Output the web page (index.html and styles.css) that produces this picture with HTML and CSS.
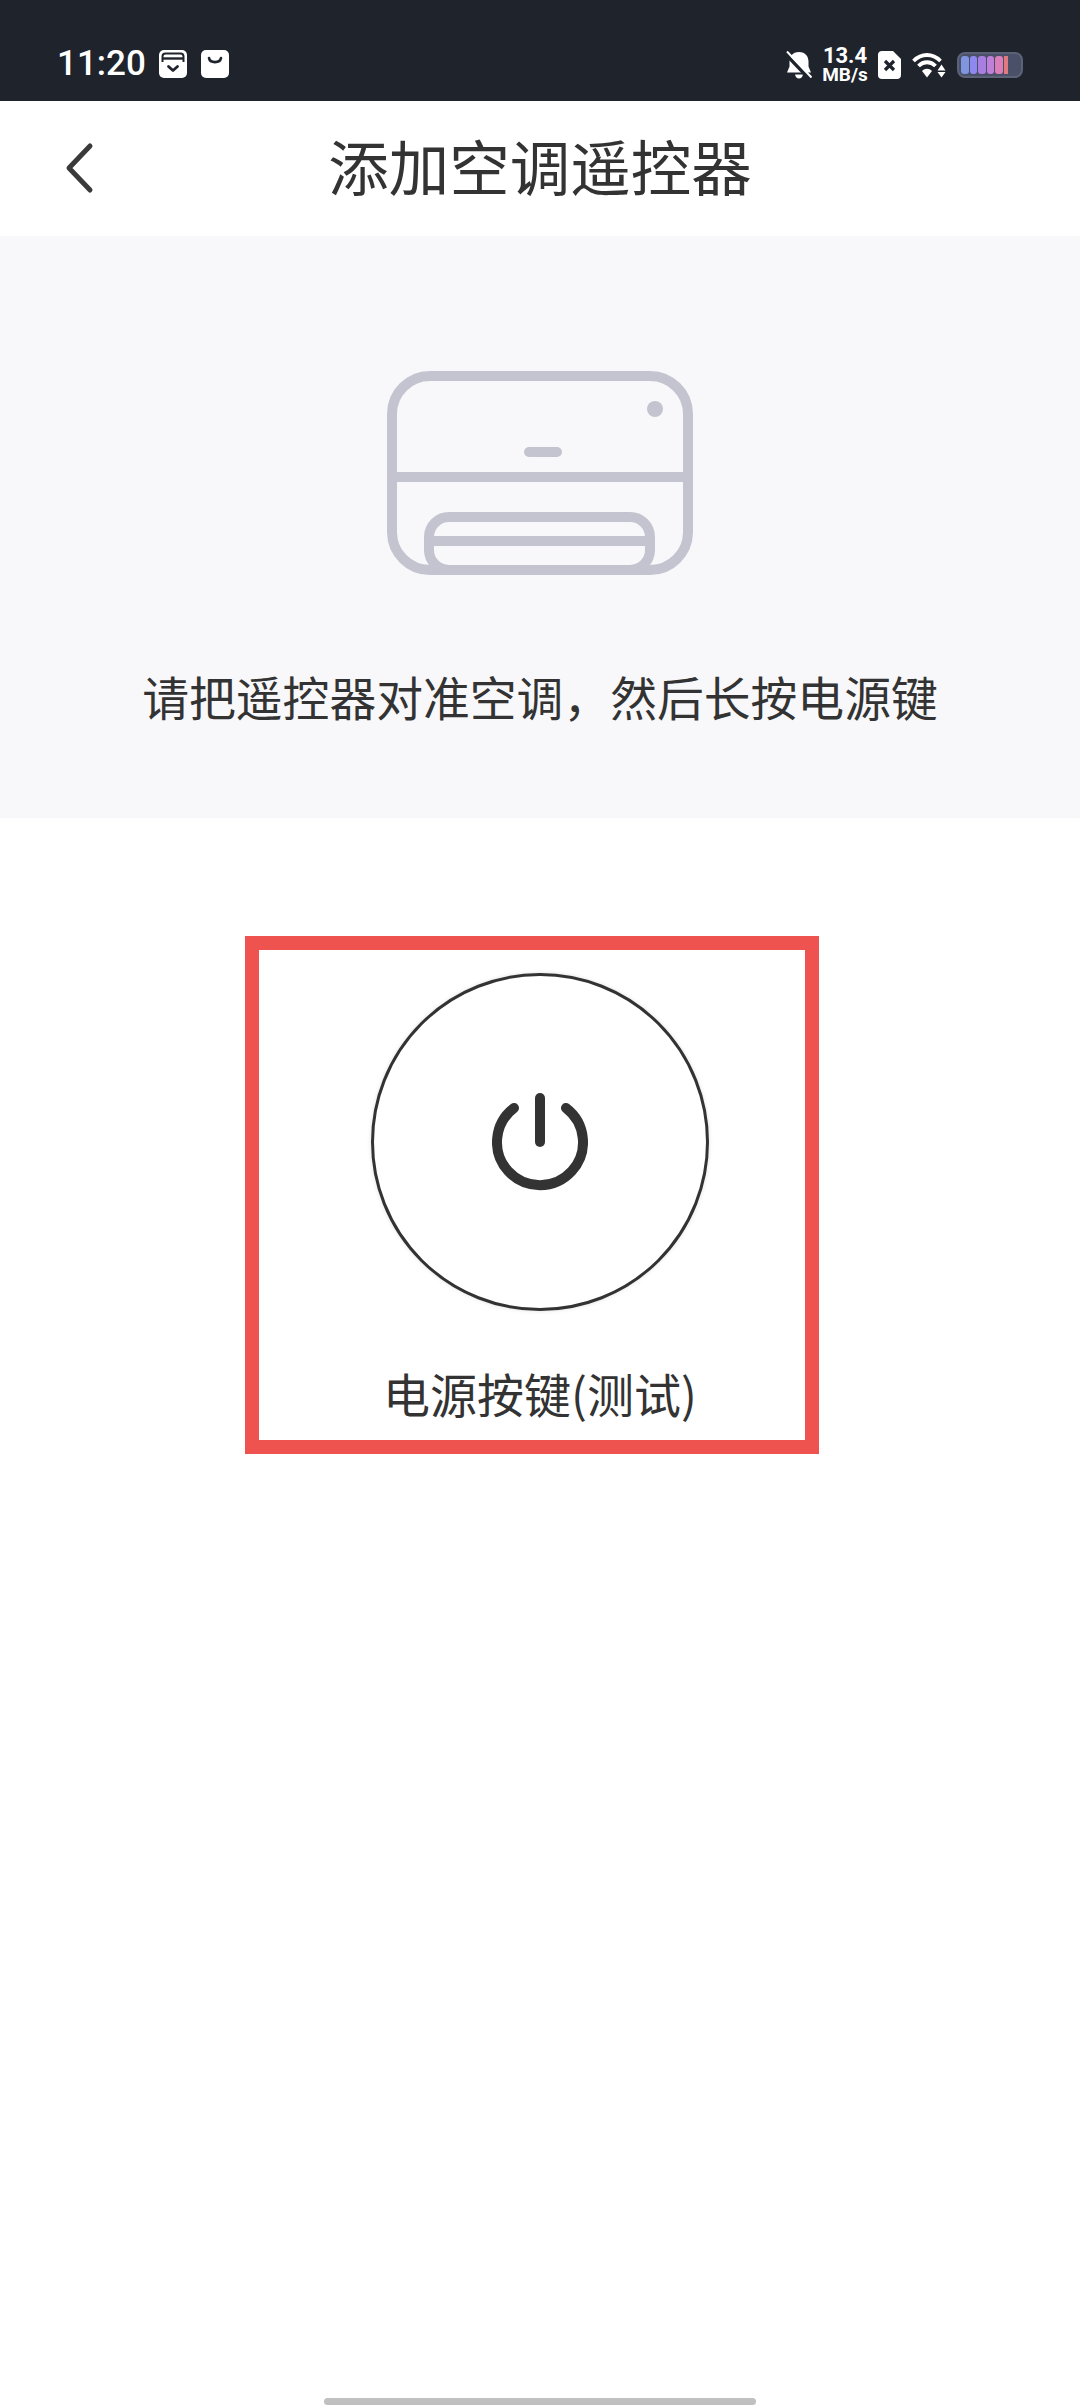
FILE: index.html
```html
<!DOCTYPE html>
<html lang="zh-CN">
<head>
    <meta charset="UTF-8">
    <meta name="viewport" content="width=device-width, initial-scale=1.0">
    <title>添加空调遥控器</title>
    <link rel="stylesheet" href="styles.css">
</head>
<body>

    <!-- Status bar -->
    <div class="status-bar">
        <div class="status-left">
            <span class="time">11:20</span>
            <svg class="app-icon" viewBox="0 0 28 28">
                <rect width="28" height="28" rx="5" fill="#fff"/>
                <path d="M3.500 12V6.500Q3.500 3.500 6.500 3.500H21.500Q24.500 3.500 24.500 6.500V12" fill="none" stroke="#1f242c" stroke-width="2"/>
                <path d="M3.500 8.500H24.500" fill="none" stroke="#1f242c" stroke-width="2.400"/>
                <path d="M9.500 16.500L14 20.500L18.500 16.500" fill="none" stroke="#1f242c" stroke-width="2.800" stroke-linecap="round" stroke-linejoin="round"/>
            </svg>
            <svg class="app-icon" viewBox="0 0 28 28">
                <rect width="28" height="28" rx="5" fill="#fff"/>
                <path d="M8 8C9 13.500 19 13.500 20 8" fill="none" stroke="#1f242c" stroke-width="2.600" stroke-linecap="round"/>
            </svg>
        </div>
        <div class="status-right">
            <svg class="bell" viewBox="0 0 26 28">
                <path d="M13 1C6.500 1 3.500 5.500 3.500 10.500V15.500L1 21.500H25L22.500 15.500V10.500C22.500 5.500 19.500 1 13 1Z" fill="#fff"/>
                <path d="M9 23.500H17C16.500 26 15 27.500 13 27.500C11 27.500 9.500 26 9 23.500Z" fill="#fff"/>
                <path d="M0 3.500L23 27.500" stroke="#1f242c" stroke-width="3.500"/>
                <path d="M1 0.500L25.500 26.500" stroke="#fff" stroke-width="2"/>
            </svg>
            <div class="speed">
                <span class="speed-num">13.4</span>
                <span class="speed-unit">MB/s</span>
            </div>
            <svg class="sim" viewBox="0 0 23 28">
                <path d="M4 0H15L23 8V24C23 26.500 21.500 28 19 28H4C1.500 28 0 26.500 0 24V4C0 1.500 1.500 0 4 0Z" fill="#fff"/>
                <path d="M7 10L16 19M16 10L7 19" stroke="#1f242c" stroke-width="3.200"/>
            </svg>
            <svg class="wifi" viewBox="0 0 34 26">
                <path d="M1.500 9C9.500 1 20.500 1 28.500 9" fill="none" stroke="#fff" stroke-width="3.800"/>
                <path d="M6.500 14C11.500 9 18.500 9 23.500 14" fill="none" stroke="#fff" stroke-width="3.800"/>
                <path d="M10 19C13 16 17 16 20 19L15 25.500Z" fill="#fff"/>
                <path d="M29.500 12.500L33.500 18.500H25.500ZM25.500 20H33.500L29.500 25.500Z" fill="#fff"/>
            </svg>
            <div class="battery">
                <span class="cell cell-1"></span>
                <span class="cell cell-2"></span>
                <span class="cell cell-3"></span>
                <span class="cell cell-4"></span>
                <span class="cell cell-5"></span>
                <span class="cell cell-6"></span>
            </div>
        </div>
    </div>

    <!-- Title bar -->
    <div class="title-bar">
        <svg class="back" viewBox="0 0 30 52">
            <path d="M26 4L5 26L26 48" fill="none" stroke="#3a3a3a" stroke-width="5" stroke-linecap="round" stroke-linejoin="round"/>
        </svg>
        <h1>添加空调遥控器</h1>
    </div>

    <!-- Instruction panel -->
    <div class="panel">
        <svg class="ac-icon" viewBox="0 0 306 204">
            <g fill="none" stroke="#c3c4cf" stroke-width="10">
                <rect x="5" y="5" width="296" height="194" rx="38"/>
                <path d="M5 106H301"/>
                <rect x="42" y="146" width="221" height="53" rx="20"/>
                <path d="M42 170H263"/>
                <path d="M142 81H170" stroke-linecap="round"/>
            </g>
            <circle cx="268" cy="38" r="8" fill="#c3c4cf"/>
        </svg>
        <p class="tip">请把遥控器对准空调，然后长按电源键</p>
    </div>

    <!-- Power key -->
    <div class="key-area">
        <div class="key">
            <button class="power-btn">
                <svg class="power-icon" viewBox="0 0 96 98">
                    <path d="M22 15A43 43 0 1 0 74 15" fill="none" stroke="#333" stroke-width="10" stroke-linecap="round"/>
                    <path d="M48 5V49" fill="none" stroke="#333" stroke-width="10" stroke-linecap="round"/>
                </svg>
            </button>
            <div class="key-label">电源按键(测试)</div>
            <div class="mark"></div>
        </div>
    </div>

    <div class="home-bar"></div>

</body>
</html>
```

FILE: styles.css
```css
/* General reset */
* {
    margin: 0;
    padding: 0;
    box-sizing: border-box;
}

body {
    width: 1080px;
    height: 2408px;
    background-color: #FFFFFF;
    font-family: "Noto Sans CJK SC", "Noto Sans", sans-serif;
    color: #333333;
    display: flex;
    flex-direction: column;
    overflow: hidden;
}

/* Status bar */
.status-bar {
    height: 101px;
    background-color: #1F242C;
    color: #FFFFFF;
    display: flex;
    justify-content: space-between;
    align-items: flex-start;
    padding: 47px 57px 0 57px;
}

.status-left {
    display: flex;
    align-items: center;
    height: 34px;
}

.time {
    font-family: Roboto, sans-serif;
    font-size: 35px;
    font-weight: 500;
    line-height: 34px;
    width: 102px;
}

.app-icon {
    width: 28px;
    height: 28px;
    margin-right: 14px;
}

.status-right {
    display: flex;
    align-items: center;
    height: 36px;
}

.bell {
    width: 26px;
    height: 28px;
}

.speed {
    font-family: Roboto, sans-serif;
    font-weight: 700;
    display: flex;
    flex-direction: column;
    align-items: center;
    width: 46px;
    margin-left: 10px;
}

.speed-num {
    font-size: 22px;
    line-height: 20px;
}

.speed-unit {
    font-size: 19px;
    line-height: 18px;
}

.sim {
    width: 23px;
    height: 28px;
    margin-left: 10px;
}

.wifi {
    width: 34px;
    height: 26px;
    margin-left: 11px;
}

.battery {
    width: 66px;
    height: 26px;
    margin-left: 11px;
    border: 2px solid #5C6278;
    border-radius: 8px;
    background-color: #4A5068;
    display: flex;
    gap: 1px;
    padding: 2px 2px;
}

.cell {
    width: 7.500px;
    border-radius: 3px;
}

.cell-1 { background-color: #8095E0; }
.cell-2 { background-color: #8E88F0; }
.cell-3 { background-color: #A87FE0; }
.cell-4 { background-color: #C07FD8; }
.cell-5 { background-color: #DC7EB8; }
.cell-6 { background-color: #E07A80; width: 4px; border-radius: 0; }

/* Title bar */
.title-bar {
    height: 135px;
    position: relative;
    display: flex;
    justify-content: center;
    align-items: center;
}

.title-bar h1 {
    font-size: 60.500px;
    font-weight: 400;
    color: #333333;
    margin-bottom: 8px;
}

.back {
    position: absolute;
    left: 64px;
    top: 41px;
    width: 30px;
    height: 52px;
}

/* Instruction panel */
.panel {
    height: 582px;
    background-color: #F8F8FA;
    display: flex;
    flex-direction: column;
    align-items: center;
    padding-top: 135px;
}

.ac-icon {
    width: 306px;
    height: 204px;
}

.tip {
    font-size: 46.800px;
    line-height: 64px;
    margin-top: 89px;
    color: #333333;
}

/* Power key */
.key-area {
    flex: 1;
    display: flex;
    justify-content: center;
    padding-top: 155px;
}

.key {
    position: relative;
    width: 336px;
    display: flex;
    flex-direction: column;
    align-items: center;
}

.power-btn {
    width: 338px;
    height: 338px;
    flex: none;
    border: 3px solid #333333;
    border-radius: 50%;
    background-color: #FFFFFF;
    box-shadow: 0 0 4px rgba(0, 0, 0, 0.12);
    display: flex;
    justify-content: center;
    align-items: center;
}

.power-icon {
    width: 96px;
    height: 98px;
}

.key-label {
    font-size: 47px;
    line-height: 64px;
    margin-top: 50px;
    white-space: nowrap;
}

/* Red highlight drawn over the key */
.mark {
    position: absolute;
    left: -127px;
    top: -37px;
    width: 574px;
    height: 518px;
    border: 14px solid #EF5350;
}

/* Gesture bar */
.home-bar {
    width: 432px;
    height: 7px;
    margin: 0 auto 3px;
    border-radius: 4px;
    background-color: #C0C0C0;
}
```
